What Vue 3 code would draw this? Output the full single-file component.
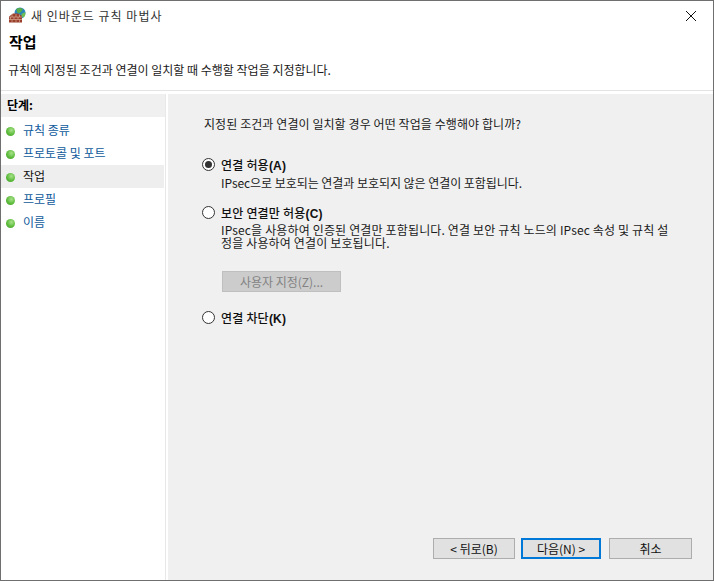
<script setup>
const steps = [
  { label: '규칙 종류', active: false },
  { label: '프로토콜 및 포트', active: false },
  { label: '작업', active: true },
  { label: '프로필', active: false },
  { label: '이름', active: false },
]
</script>

<template>
  <div class="window">
    <div class="titlebar">
      <svg class="appicon" width="18" height="18" viewBox="0 0 18 18">
        <circle cx="11" cy="6" r="5.500" fill="#2a86bb" />
        <path d="M7.500 1.800c2-1.300 5-1 6.500.5L12 5 9.500 6.500 8 5z" fill="#58ad48" />
        <path d="M12.500 7l3.800-2c.3 2-.2 4-1.500 5.500l-2.300-1z" fill="#6fbf55" />
        <path d="M0 9.500 4 6.500h5l4 2.500v6.500H0z" fill="#9a3f2c" />
        <path d="M0 10h13M0 12.500h13M3 7v3M7 7v3M10.500 7.500V10M1.500 10v2.500M5 10v2.500M9 10v2.500M3 12.500v3M7 12.500v3M10.500 12.500v3" stroke="#d9a893" stroke-width=".7" fill="none" />
      </svg>
      <span class="wintitle">새 인바운드 규칙 마법사</span>
      <svg class="close" width="12" height="12" viewBox="0 0 12 12">
        <path d="M1 1l10 10M11 1L1 11" stroke="#111" stroke-width="1" fill="none" />
      </svg>
    </div>

    <header class="header">
      <h1 class="heading">작업</h1>
      <p class="subtitle">규칙에 지정된 조건과 연결이 일치할 때 수행할 작업을 지정합니다.</p>
    </header>

    <div class="body">
      <aside class="sidebar">
        <div class="sidehead">단계:</div>
        <ul class="steps">
          <li v-for="s in steps" :key="s.label" class="step" :class="{ active: s.active }">
            <span class="dot"></span>
            <span class="steplabel">{{ s.label }}</span>
          </li>
        </ul>
      </aside>

      <main class="panel">
        <p class="question">지정된 조건과 연결이 일치할 경우 어떤 작업을 수행해야 합니까?</p>

        <div class="option first">
          <span class="radio checked"></span>
          <span class="optlabel">연결 허용<b>(A)</b></span>
        </div>
        <p class="desc">IPsec으로 보호되는 연결과 보호되지 않은 연결이 포함됩니다.</p>

        <div class="option second">
          <span class="radio"></span>
          <span class="optlabel">보안 연결만 허용<b>(C)</b></span>
        </div>
        <p class="desc wide">IPsec을 사용하여 인증된 연결만 포함됩니다. 연결 보안 규칙 노드의 IPsec 속성 및 규칙 설정을 사용하여 연결이 보호됩니다.</p>

        <button class="custom" disabled>사용자 지정(Z)...</button>

        <div class="option third">
          <span class="radio"></span>
          <span class="optlabel">연결 차단<b>(K)</b></span>
        </div>

        <div class="actions">
          <button class="btn back">&lt; 뒤로(B)</button>
          <button class="btn next">다음(N) &gt;</button>
          <button class="btn cancel">취소</button>
        </div>
      </main>
    </div>
  </div>
</template>

<style>
html, body { margin: 0; padding: 0; background: #fff; }
</style>

<style scoped>
* { box-sizing: border-box; }
.window {
  width: 714px;
  height: 581px;
  border: 1px solid #6f6f6f;
  background: #fff;
  display: flex;
  flex-direction: column;
  font-family: "Noto Sans CJK KR", "Liberation Sans", sans-serif;
  font-size: 12px;
  color: #1a1a1a;
  overflow: hidden;
}
.titlebar {
  height: 29px;
  display: flex;
  align-items: center;
  padding: 0 16px 0 8px;
  flex: none;
}
.appicon { flex: none; }
.wintitle {
  margin-left: 4px;
  font-size: 12px;
  letter-spacing: 1px;
  color: #333;
}
.close { margin-left: auto; }
.header {
  height: 61px;
  flex: none;
  border-bottom: 1px solid #e4e4e4;
  padding-left: 8px;
}
.heading {
  margin: 0;
  font-size: 15px;
  font-weight: 700;
  line-height: 24px;
  color: #000;
}
.subtitle {
  margin: 8px 0 0 -1px;
  font-size: 12px;
  line-height: 16px;
}
.body {
  flex: 1;
  display: flex;
  padding-top: 3px;
  min-height: 0;
}
.sidebar {
  width: 165px;
  flex: none;
  border-right: 1px solid #e8e8e8;
  margin-right: 2px;
}
.sidehead {
  height: 23px;
  background: #f0f0f0;
  font-weight: 700;
  font-size: 12px;
  line-height: 21px;
  padding-left: 6px;
  color: #000;
}
.steps {
  list-style: none;
  margin: 0;
  padding: 2px 0 0;
}
.step {
  height: 23px;
  display: flex;
  align-items: center;
  padding-left: 5px;
  color: #0f5a9c;
  width: 163px;
}
.step.active {
  background: #eeeeee;
  color: #111;
}
.dot {
  width: 9px;
  height: 9px;
  margin-top: 2px;
  border-radius: 50%;
  background: radial-gradient(circle at 60% 35%, #a8e28a, #5dbb3c 55%, #3f9a28);
  flex: none;
}
.steplabel { margin: 0 0 2px 8px; }
.panel {
  flex: 1;
  background: #f0f0f0;
  display: flex;
  flex-direction: column;
  padding: 0 40px 0 34px;
}
.question {
  margin: 21px 0 0 2px;
  line-height: 17px;
  letter-spacing: .08px;
}
.option {
  display: flex;
  align-items: center;
  height: 18px;
}
.option.first { margin-top: 23px; }
.option.second { margin-top: 14px; }
.option.third { margin-top: 16px; }
.radio {
  width: 13px;
  height: 13px;
  border: 1px solid #333;
  border-radius: 50%;
  background: #fff;
  flex: none;
  position: relative;
}
.radio.checked::after {
  content: "";
  position: absolute;
  inset: 2px;
  background: #333;
  border-radius: 50%;
}
.optlabel {
  margin-left: 6px;
  font-weight: 500;
  letter-spacing: .2px;
  color: #111;
}
.optlabel b { font-family: "Liberation Sans", sans-serif; font-weight: 700; }
.desc {
  margin: 3px 0 0 19px;
  line-height: 13px;
  letter-spacing: -.05px;
}
.desc.wide { margin-top: 2px; width: 450px; word-break: break-all; letter-spacing: .15px; }
.custom {
  margin: 22px 0 0 20px;
  width: 119px;
  height: 21px;
  background: #cccccc;
  border: 1px solid #bfbfbf;
  color: #838383;
  font: inherit;
  padding: 0;
}
.actions {
  margin-top: auto;
  margin-bottom: 21px;
  margin-right: -19px;
  display: flex;
  justify-content: flex-end;
  gap: 6px;
}
.btn {
  height: 21px;
  background: #e1e1e1;
  border: 1px solid #adadad;
  color: #111;
  font: inherit;
  padding: 0;
  width: 82px;
}
.btn.next {
  width: 80px;
  border: 2px solid #0078d7;
}
.btn.cancel {
  width: 83px;
  margin-left: 2px;
}
</style>
